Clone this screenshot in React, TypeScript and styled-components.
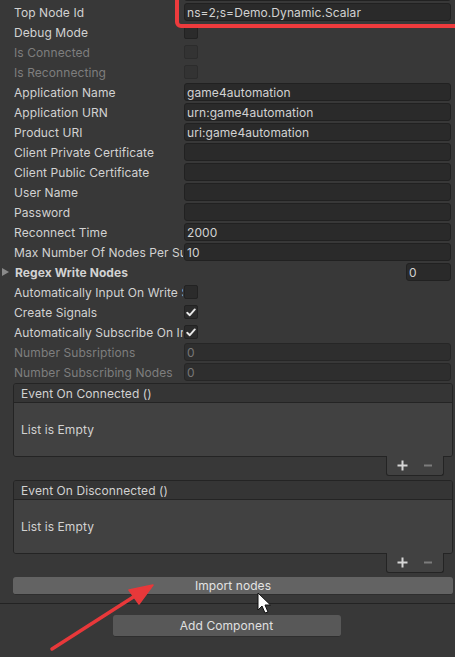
import React from "react";
import styled, { createGlobalStyle } from "styled-components";

const GlobalStyle = createGlobalStyle`
  html, body { margin: 0; padding: 0; background: #383838; }
  body { font-family: Inter, "Noto Sans", "Liberation Sans", sans-serif; font-size: 12px; letter-spacing: 0.08px; }
  * { box-sizing: border-box; }
`;

const Page = styled.div`
  position: relative;
  width: 455px;
  height: 657px;
  overflow: hidden;
  background: #383838;
  color: #d2d2d2;
`;

const Props = styled.div`
  margin-top: -17px;
  display: flex;
  flex-direction: column;
  gap: 2px;
`;

const Row = styled.div`
  display: flex;
  align-items: center;
  height: 18px;
  padding: 0 4px 0 14px;
`;

const FoldRow = styled(Row)`
  padding-left: 2px;
`;

const Label = styled.div<{ $disabled?: boolean; $bold?: boolean }>`
  width: 169px;
  margin-right: 1px;
  flex-shrink: 0;
  overflow: hidden;
  white-space: nowrap;
  line-height: 18px;
  padding-top: 1px;
  color: ${(p) => (p.$disabled ? "#7e7e7e" : "#d2d2d2")};
  font-weight: ${(p) => (p.$bold ? 700 : 400)};
`;

const Field = styled.div<{ $disabled?: boolean }>`
  flex: 1;
  height: 18px;
  background: ${(p) => (p.$disabled ? "#2e2e2e" : "#2a2a2a")};
  border: 1px solid ${(p) => (p.$disabled ? "#262626" : "#212121")};
  border-radius: 3px;
  padding: 1px 2px 0;
  line-height: 16px;
  white-space: nowrap;
  overflow: hidden;
  color: ${(p) => (p.$disabled ? "#777777" : "#d2d2d2")};
`;

const IntField = styled(Field)`
  flex: 0 0 45px;
  margin-left: auto;
`;

const Check = styled.div<{ $disabled?: boolean }>`
  width: 14px;
  height: 14px;
  border-radius: 2px;
  background: ${(p) => (p.$disabled ? "#333333" : "#2b2b2b")};
  border: 1px solid ${(p) => (p.$disabled ? "#2c2c2c" : "#222222")};
  display: flex;
  align-items: center;
  justify-content: center;
`;

const Triangle = styled.div`
  width: 0;
  height: 0;
  border-top: 4px solid transparent;
  border-bottom: 4px solid transparent;
  border-left: 7px solid #8a8a8a;
  margin-right: 6px;
  flex-shrink: 0;
`;

const FoldLabel = styled(Label)`
  width: auto;
`;

const ListBlock = styled.div<{ $top: number }>`
  margin: ${(p) => p.$top}px 2px 0 13px;
  display: flex;
  flex-direction: column;
`;

const ListBox = styled.div`
  border: 1px solid #242424;
  border-radius: 3px;
  overflow: hidden;
`;

const ListHeader = styled.div`
  height: 19px;
  background: #353535;
  border-bottom: 1px solid #242424;
  padding: 1px 0 0 7px;
  line-height: 18px;
  color: #d2d2d2;
`;

const ListBody = styled.div`
  height: 53px;
  background: #414141;
  padding-left: 7px;
  display: flex;
  align-items: center;
  color: #d2d2d2;
`;

const FooterRow = styled.div`
  display: flex;
  justify-content: flex-end;
  padding-right: 9px;
`;

const Footer = styled.div`
  width: 58px;
  height: 20px;
  margin-top: -1px;
  background: #414141;
  border: 1px solid #242424;
  border-top: none;
  border-radius: 0 0 3px 3px;
  display: flex;
  align-items: center;
  gap: 15px;
  padding: 0 0 1px 10px;
`;

const Icon = styled.svg`
  display: block;
  flex-shrink: 0;
`;

const WideButton = styled.div`
  margin: 4px 2px 0 13px;
  height: 18px;
  border-radius: 3px;
  background: #636363;
  border-bottom: 1px solid #2e2e2e;
  text-align: center;
  line-height: 18px;
  color: #e4e4e4;
`;

const Separator = styled.div`
  margin-top: 8px;
  height: 1px;
  background: #232323;
`;

const AddRow = styled.div`
  display: flex;
  justify-content: center;
  padding-top: 11px;
  padding-right: 2px;
`;

const AddButton = styled.div`
  width: 228px;
  height: 22px;
  border-radius: 3px;
  background: #585858;
  border-bottom: 1px solid #2e2e2e;
  text-align: center;
  line-height: 22px;
  color: #e0e0e0;
`;

const Highlight = styled.div`
  position: absolute;
  left: 175px;
  top: -10px;
  width: 300px;
  height: 38px;
  border: 4px solid #ee3b3d;
  border-radius: 6px;
  pointer-events: none;
`;

const Overlay = styled.svg`
  position: absolute;
  left: 0;
  top: 0;
  pointer-events: none;
`;

const CheckMark = () => (
  <svg width="10" height="9" viewBox="0 0 10 9">
    <path d="M1.2 4.8 L3.8 7.2 L8.8 1.4" fill="none" stroke="#e6e6e6" strokeWidth="1.9" strokeLinecap="round" strokeLinejoin="round" />
  </svg>
);

const Plus = () => (
  <Icon width="11" height="11" viewBox="0 0 11 11">
    <rect x="0.5" y="4.5" width="10" height="2" fill="#d6d6d6" />
    <rect x="4.5" y="0.5" width="2" height="10" fill="#d6d6d6" />
  </Icon>
);

const Minus = () => (
  <Icon width="10" height="11" viewBox="0 0 10 11">
    <rect x="1" y="4.5" width="8" height="2" fill="#7c7c7c" />
  </Icon>
);

type P =
  | { k: "text"; label: string; value?: string; disabled?: boolean }
  | { k: "check"; label: string; checked?: boolean; disabled?: boolean }
  | { k: "fold"; label: string; value: string };

const props: P[] = [
  { k: "text", label: "", value: "" },
  { k: "text", label: "Top Node Id", value: "ns=2;s=Demo.Dynamic.Scalar" },
  { k: "check", label: "Debug Mode" },
  { k: "check", label: "Is Connected", disabled: true },
  { k: "check", label: "Is Reconnecting", disabled: true },
  { k: "text", label: "Application Name", value: "game4automation" },
  { k: "text", label: "Application URN", value: "urn:game4automation" },
  { k: "text", label: "Product URI", value: "uri:game4automation" },
  { k: "text", label: "Client Private Certificate", value: "" },
  { k: "text", label: "Client Public Certificate", value: "" },
  { k: "text", label: "User Name", value: "" },
  { k: "text", label: "Password", value: "" },
  { k: "text", label: "Reconnect Time", value: "2000" },
  { k: "text", label: "Max Number Of Nodes Per Subscription", value: "10" },
  { k: "fold", label: "Regex Write Nodes", value: "0" },
  { k: "check", label: "Automatically Input On Write Signals" },
  { k: "check", label: "Create Signals", checked: true },
  { k: "check", label: "Automatically Subscribe On Import", checked: true },
  { k: "text", label: "Number Subsriptions", value: "0", disabled: true },
  { k: "text", label: "Number Subscribing Nodes", value: "0", disabled: true },
];

const EventList = ({ title, top }: { title: string; top: number }) => (
  <ListBlock $top={top}>
    <ListBox>
      <ListHeader>{title}</ListHeader>
      <ListBody>List is Empty</ListBody>
    </ListBox>
    <FooterRow>
      <Footer>
        <Plus />
        <Minus />
      </Footer>
    </FooterRow>
  </ListBlock>
);

export default function App() {
  return (
    <>
      <GlobalStyle />
      <Page>
        <Props>
          {props.map((p, i) => {
            if (p.k === "fold") {
              return (
                <FoldRow key={i}>
                  <Triangle />
                  <FoldLabel $bold>{p.label}</FoldLabel>
                  <IntField>{p.value}</IntField>
                </FoldRow>
              );
            }
            if (p.k === "check") {
              return (
                <Row key={i}>
                  <Label $disabled={p.disabled}>{p.label}</Label>
                  <Check $disabled={p.disabled}>{p.checked && <CheckMark />}</Check>
                </Row>
              );
            }
            return (
              <Row key={i}>
                <Label $disabled={p.disabled}>{p.label}</Label>
                <Field $disabled={p.disabled}>{p.value}</Field>
              </Row>
            );
          })}
        </Props>
        <EventList title="Event On Connected ()" top={2} />
        <EventList title="Event On Disconnected ()" top={4} />
        <WideButton>Import nodes</WideButton>
        <Separator />
        <AddRow>
          <AddButton>Add Component</AddButton>
        </AddRow>

        <Highlight />
        <Overlay width="455" height="657" viewBox="0 0 455 657">
          <line x1="52" y1="649" x2="138" y2="594" stroke="#e8383a" strokeWidth="3.5" strokeLinecap="round" />
          <polygon points="153,585 129,590 139,604" fill="#e8383a" stroke="#e8383a" strokeWidth="1.5" strokeLinejoin="round" />
          <path
            d="M258 593 L258 610 L262 606 L265 613 L268 612 L265 605 L270.5 605 Z"
            fill="#ffffff"
            stroke="#111111"
            strokeWidth="1"
            strokeLinejoin="round"
          />
        </Overlay>
      </Page>
    </>
  );
}
